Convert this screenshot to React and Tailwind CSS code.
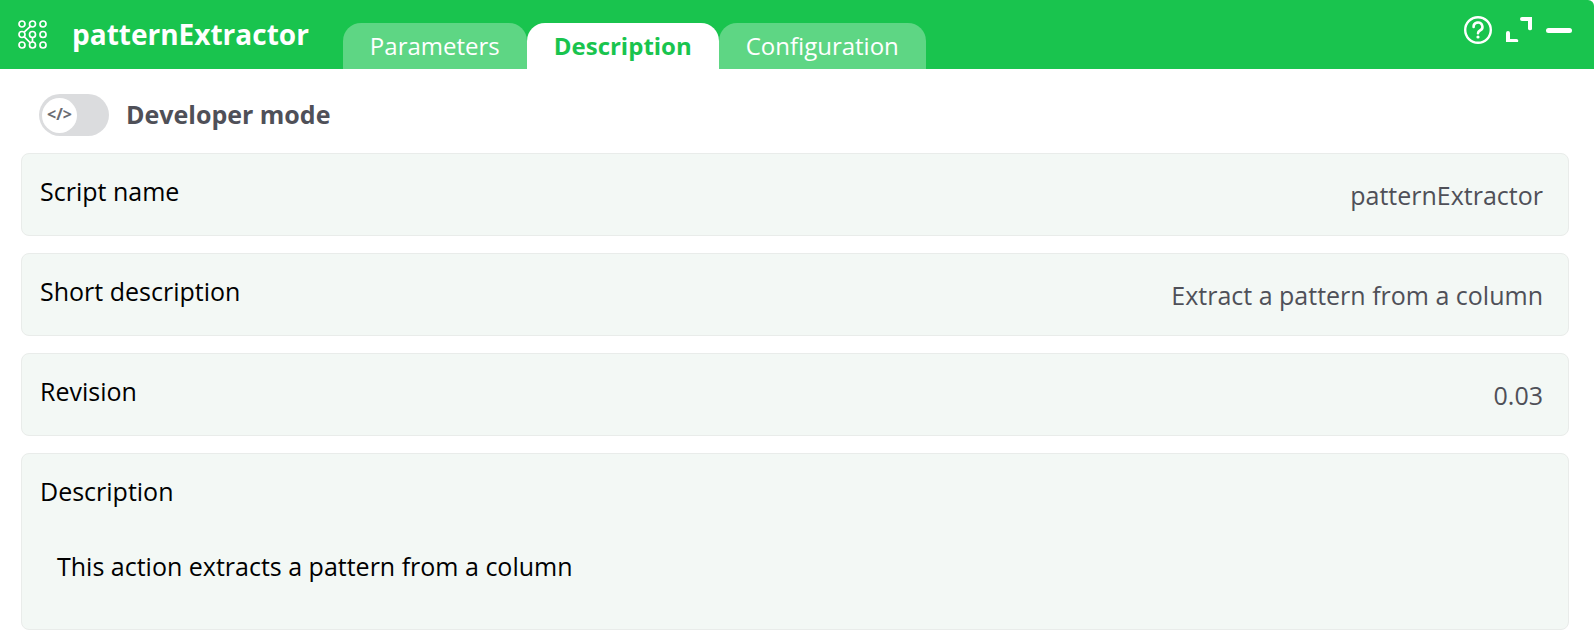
import { useState } from "react";

const TABS = ["Parameters", "Description", "Configuration"];

const FIELDS = [
  { label: "Script name", value: "patternExtractor" },
  { label: "Short description", value: "Extract a pattern from a column" },
  { label: "Revision", value: "0.03" },
];

function PatternIcon() {
  const points = [4, 14.5, 25];

  return (
    <svg
      className="size-[29px] shrink-0"
      viewBox="0 0 29 29"
      fill="none"
      stroke="white"
      strokeWidth="1.7"
      aria-hidden="true"
    >
      {points.map((y) =>
        points.map((x) => <circle key={`${x}-${y}`} cx={x} cy={y} r="3" />)
      )}
      <path d="M12.3 6.4 6.2 12.2M6.1 16.7 12.3 22.8M14.5 17.5V22" />
    </svg>
  );
}

function HelpIcon() {
  return (
    <svg className="size-7" viewBox="0 0 28 28" fill="none" stroke="white" aria-hidden="true">
      <circle cx="14" cy="14" r="12.8" strokeWidth="2.4" />
      <path
        d="M9.6 11a4.4 4.2 0 1 1 6.4 3.5c-1.4.8-2 1.4-2 2.7"
        strokeWidth="2.6"
        strokeLinecap="round"
      />
      <circle cx="14" cy="21" r="1.6" fill="white" stroke="none" />
    </svg>
  );
}

function ExpandIcon() {
  return (
    <svg className="size-[26px]" viewBox="0 0 26 26" fill="white" aria-hidden="true">
      <path d="M16 0h10v10a2 2 0 0 1-4 2V4h-6a2 2 0 0 1 0-4Z" />
      <path d="M0 16a2 2 0 0 1 4 0v6h6a2 2 0 0 1 2 3H0Z" />
    </svg>
  );
}

function Header({ activeTab, onSelect }) {
  return (
    <header className="flex h-[69px] rounded-tr-md bg-[#19c44e] pl-[18px] pr-[22px] text-white">
      <div className="flex items-center gap-[25px]">
        <PatternIcon />
        <h1 className="pb-0.5 text-[28px] font-bold">patternExtractor</h1>
      </div>

      <div role="tablist" className="ml-[34px] flex items-end">
        {TABS.map((tab) => (
          <button
            key={tab}
            type="button"
            role="tab"
            aria-selected={activeTab === tab}
            onClick={() => onSelect(tab)}
            className={`h-[46px] rounded-t-[18px] px-[27px] text-2xl ${
              activeTab === tab
                ? "bg-white font-bold text-[#19c44e]"
                : "bg-[#5ed684] text-white"
            }`}
          >
            {tab}
          </button>
        ))}
      </div>

      <div className="ml-auto flex h-[60px] items-center gap-3.5">
        <button type="button" aria-label="Help">
          <HelpIcon />
        </button>
        <button type="button" aria-label="Expand">
          <ExpandIcon />
        </button>
        <button type="button" aria-label="Minimize">
          <span className="block h-[5px] w-[26px] rounded-full bg-white" />
        </button>
      </div>
    </header>
  );
}

function DeveloperToggle() {
  const [enabled, setEnabled] = useState(false);

  return (
    <label className="ml-[18px] flex items-center gap-[17px] self-start text-[25px] leading-9 font-bold text-[#4f5058]">
      <input
        type="checkbox"
        className="sr-only"
        checked={enabled}
        onChange={(e) => setEnabled(e.target.checked)}
      />
      <span
        className={`flex h-[42px] w-[70px] items-center rounded-full px-[3px] ${
          enabled ? "justify-end bg-[#19c44e]" : "bg-[#dbdcde]"
        }`}
      >
        <span className="flex size-[35px] items-center justify-center rounded-full bg-white pb-0.5 text-base font-bold text-[#6b6c72]">
          {"</>"}
        </span>
      </span>
      <span className="pb-0.5">Developer mode</span>
    </label>
  );
}

function App() {
  const [activeTab, setActiveTab] = useState("Description");

  return (
    <div className="bg-white font-['Open_Sans',sans-serif] text-black">
      <Header activeTab={activeTab} onSelect={setActiveTab} />

      <main className="flex flex-col gap-[17px] pt-[25px] pr-[25px] pb-3 pl-[21px]">
        <DeveloperToggle />

        {FIELDS.map((field) => (
          <section
            key={field.label}
            className="flex h-[83px] justify-between rounded-lg border border-[#e9ecea] bg-[#f3f8f5] pt-[19px] pr-[25px] pl-[18px] text-[25px] leading-9"
          >
            <h2>{field.label}</h2>
            <p className="pt-1 text-[#4f5058]">{field.value}</p>
          </section>
        ))}

        <section className="rounded-lg border border-[#e9ecea] bg-[#f3f8f5] px-[18px] pt-[19px] pb-[45px] text-[25px] leading-9">
          <h2>Description</h2>
          <p className="mt-[39px] pl-[17px]">This action extracts a pattern from a column</p>
        </section>
      </main>
    </div>
  );
}

export default App;
